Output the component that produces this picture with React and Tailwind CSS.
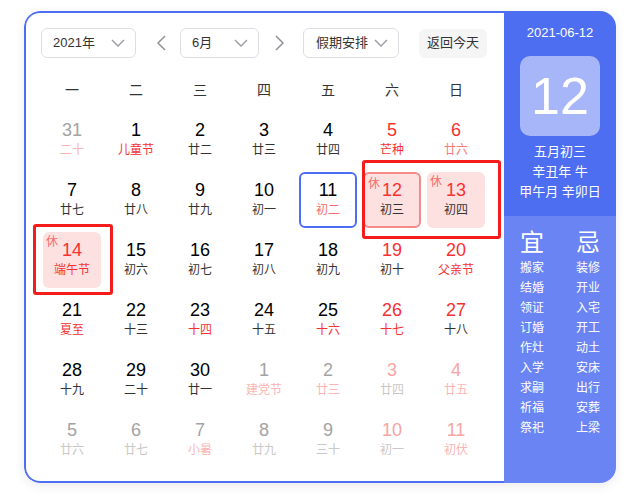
const RED = 'text-[#f73131]';
const BLACK = 'text-black';
const DARK = 'text-[#333]';
const GREY = 'text-[#a3a3a3]';
const LGREY = 'text-[#c8c8c8]';
const PINK = 'text-[#f9a3a3]';
const LPINK = 'text-[#fbb4b4]';

const rows = [
  [
    { d: 31, l: '二十', dc: GREY, lc: LPINK },
    { d: 1, l: '儿童节', dc: BLACK, lc: RED },
    { d: 2, l: '廿二', dc: BLACK, lc: DARK },
    { d: 3, l: '廿三', dc: BLACK, lc: DARK },
    { d: 4, l: '廿四', dc: BLACK, lc: DARK },
    { d: 5, l: '芒种', dc: RED, lc: RED },
    { d: 6, l: '廿六', dc: RED, lc: 'text-[#f77a7a]' },
  ],
  [
    { d: 7, l: '廿七', dc: BLACK, lc: DARK },
    { d: 8, l: '廿八', dc: BLACK, lc: DARK },
    { d: 9, l: '廿九', dc: BLACK, lc: DARK },
    { d: 10, l: '初一', dc: BLACK, lc: DARK },
    { d: 11, l: '初二', dc: BLACK, lc: 'text-[#f56c6c]', box: 'border-2 border-[#4e6ef2]' },
    { d: 12, l: '初三', dc: RED, lc: DARK, rest: true, box: 'border-2 border-[#f38b8b] bg-[#fde1e1]' },
    { d: 13, l: '初四', dc: RED, lc: DARK, rest: true, box: 'bg-[#fde1e1]' },
  ],
  [
    { d: 14, l: '端午节', dc: RED, lc: RED, rest: true, box: 'bg-[#fde1e1]' },
    { d: 15, l: '初六', dc: BLACK, lc: DARK },
    { d: 16, l: '初七', dc: BLACK, lc: DARK },
    { d: 17, l: '初八', dc: BLACK, lc: DARK },
    { d: 18, l: '初九', dc: BLACK, lc: DARK },
    { d: 19, l: '初十', dc: RED, lc: DARK },
    { d: 20, l: '父亲节', dc: RED, lc: RED },
  ],
  [
    { d: 21, l: '夏至', dc: BLACK, lc: RED },
    { d: 22, l: '十三', dc: BLACK, lc: DARK },
    { d: 23, l: '十四', dc: BLACK, lc: RED },
    { d: 24, l: '十五', dc: BLACK, lc: DARK },
    { d: 25, l: '十六', dc: BLACK, lc: RED },
    { d: 26, l: '十七', dc: RED, lc: RED },
    { d: 27, l: '十八', dc: RED, lc: DARK },
  ],
  [
    { d: 28, l: '十九', dc: BLACK, lc: DARK },
    { d: 29, l: '二十', dc: BLACK, lc: DARK },
    { d: 30, l: '廿一', dc: BLACK, lc: DARK },
    { d: 1, l: '建党节', dc: GREY, lc: LPINK },
    { d: 2, l: '廿三', dc: GREY, lc: LPINK },
    { d: 3, l: '廿四', dc: PINK, lc: LGREY },
    { d: 4, l: '廿五', dc: PINK, lc: LPINK },
  ],
  [
    { d: 5, l: '廿六', dc: GREY, lc: LGREY },
    { d: 6, l: '廿七', dc: GREY, lc: LGREY },
    { d: 7, l: '小暑', dc: GREY, lc: LPINK },
    { d: 8, l: '廿九', dc: GREY, lc: LGREY },
    { d: 9, l: '三十', dc: GREY, lc: LGREY },
    { d: 10, l: '初一', dc: PINK, lc: LGREY },
    { d: 11, l: '初伏', dc: PINK, lc: LPINK },
  ],
];

const yi = ['搬家', '结婚', '领证', '订婚', '作灶', '入学', '求嗣', '祈福', '祭祀'];
const ji = ['装修', '开业', '入宅', '开工', '动土', '安床', '出行', '安葬', '上梁'];

function Chevron() {
  return (
    <svg width="14" height="8" viewBox="0 0 14 8" fill="none">
      <polyline points="1,1 7,7 13,1" stroke="#9a9aa3" strokeWidth="1.4" />
    </svg>
  );
}

function Arrow({ dir }) {
  return (
    <svg width="9" height="16" viewBox="0 0 9 16" fill="none">
      {dir === 'left' ? (
        <polyline points="8,1 1,8 8,15" stroke="#8f8f98" strokeWidth="1.5" />
      ) : (
        <polyline points="1,1 8,8 1,15" stroke="#8f8f98" strokeWidth="1.5" />
      )}
    </svg>
  );
}

export default function App() {
  return (
    <div className="w-[636px] h-[496px] bg-white pt-[11px] pl-[24px] font-['Liberation_Sans','Noto_Sans_CJK_SC',sans-serif]">
      <div className="relative flex w-[592px] h-[472px] rounded-[16px] overflow-hidden shadow-[0_3px_12px_rgba(0,0,0,0.08)]">
        {/* left */}
        <div className="w-[480px] h-full border-2 border-r-0 border-[#4e6ef2] rounded-l-[16px] pl-[14px] pt-[15px]">
          <div className="flex items-center h-[30px] text-[13px] text-[#333]">
            <div className="ml-px w-[95px] h-[30px] border border-[#dcdee4] rounded-[6px] flex items-center justify-between pl-[11px] pr-[10px]">
              <span>2021年</span>
              <Chevron />
            </div>
            <div className="ml-[21px] flex items-center"><Arrow dir="left" /></div>
            <div className="ml-[14px] w-[79px] h-[30px] border border-[#dcdee4] rounded-[6px] flex items-center justify-between pl-[11px] pr-[10px]">
              <span>6月</span>
              <Chevron />
            </div>
            <div className="ml-[16px] flex items-center"><Arrow dir="right" /></div>
            <div className="ml-[19px] w-[96px] h-[30px] border border-[#dcdee4] rounded-[6px] flex items-center justify-between pl-[12px] pr-[10px]">
              <span>假期安排</span>
              <Chevron />
            </div>
            <div className="ml-[20px] w-[68px] h-[29px] bg-[#f5f5f6] rounded-[6px] flex items-center justify-center">
              返回今天
            </div>
          </div>

          <div className="mt-[12px] grid grid-cols-[repeat(7,64px)] h-[40px] items-center text-[14px] text-[#333]">
            {['一', '二', '三', '四', '五', '六', '日'].map((w) => (
              <div key={w} className="text-center">{w}</div>
            ))}
          </div>

          <div className="grid grid-cols-[repeat(7,64px)]">
            {rows.flat().map((c, i) => (
              <div key={i} className="h-[60px] flex items-center justify-center">
                <div className={`relative w-[58px] h-[56px] rounded-[6px] flex flex-col items-center justify-center ${c.box || ''}`}>
                  {c.rest && (
                    <span className="absolute top-[2px] left-[3px] text-[12px] leading-[16px] text-[#f56c6c]">休</span>
                  )}
                  <span className={`text-[18px] leading-[20px] ${c.dc}`}>{c.d}</span>
                  <span className={`text-[12px] leading-[20px] ${c.lc}`}>{c.l}</span>
                </div>
              </div>
            ))}
          </div>
        </div>

        {/* right panel */}
        <div className="w-[112px] h-full flex flex-col text-white">
          <div className="h-[205px] bg-[#4e6ef2] pt-[12px] flex flex-col items-center">
            <div className="text-[13px] leading-[20px]">2021-06-12</div>
            <div className="mt-[13px] w-[80px] h-[80px] rounded-[10px] bg-[#a7b6f8] flex items-center justify-center text-[52px] leading-none">
              12
            </div>
            <div className="mt-[6px] text-[13px] leading-[20px] text-center">
              <div>五月初三</div>
              <div>辛丑年 牛</div>
              <div>甲午月 辛卯日</div>
            </div>
          </div>
          <div className="flex-1 bg-[#6a84f4] pt-[13px] grid grid-cols-2 content-start">
            <div className="flex flex-col items-center">
              <div className="text-[24px] leading-[28px]">宜</div>
              <div className="mt-px flex flex-col items-center text-[12px] leading-[20px]">
                {yi.map((t) => <div key={t}>{t}</div>)}
              </div>
            </div>
            <div className="flex flex-col items-center">
              <div className="text-[24px] leading-[28px]">忌</div>
              <div className="mt-px flex flex-col items-center text-[12px] leading-[20px]">
                {ji.map((t) => <div key={t}>{t}</div>)}
              </div>
            </div>
          </div>
        </div>

        {/* annotation frames */}
        <div className="absolute left-[338px] top-[149px] w-[139px] h-[79px] border-[3px] border-[#f51c1c] rounded-[3px] pointer-events-none" />
        <div className="absolute left-[9px] top-[213px] w-[80px] h-[71px] border-[3px] border-[#f51c1c] rounded-[3px] pointer-events-none" />
      </div>
    </div>
  );
}
